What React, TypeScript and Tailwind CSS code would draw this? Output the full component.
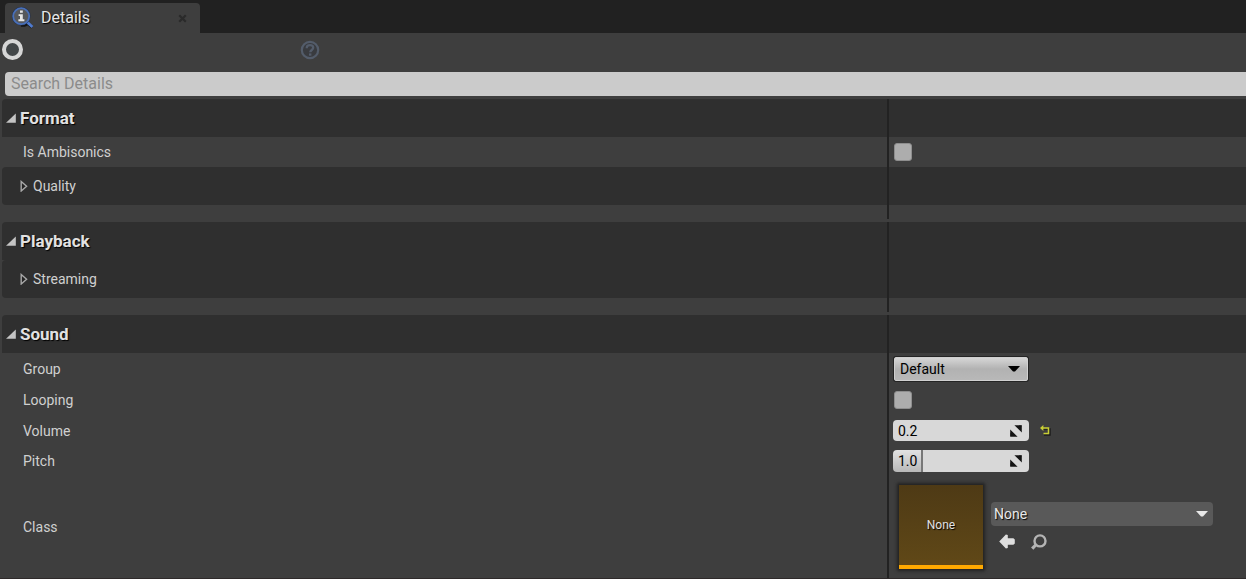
import React from 'react';

// Icons

const DetailsIcon: React.FC = () => (
  <svg width="22" height="22" viewBox="0 0 22 22" aria-hidden="true">
    <path d="M9 18.5c4 .6 6-1 6.5-2l4.5 4.2" fill="none" stroke="#151515" strokeWidth="2.4" />
    <path d="M14.5 14.5 20.4 20" stroke="#4f7bd0" strokeWidth="2.8" />
    <circle cx="9.2" cy="9.2" r="8" fill="#505256" stroke="#22304e" strokeWidth="2.6" />
    <circle cx="9.2" cy="9.2" r="8" fill="#56585c" stroke="#4a70b8" strokeWidth="1.8" />
    <path d="M8 3.6h2.8v2.2H8zM6.6 7.2h4.2v5h1.6v2H6.4v-2H8V9H6.6z" fill="#e6e6e6" />
  </svg>
);

const HelpIcon: React.FC = () => (
  <svg width="20" height="20" viewBox="0 0 20 20" fill="none" stroke="#535c6a" aria-hidden="true">
    <circle cx="10" cy="10" r="8.2" strokeWidth="2.2" fill="#393b3f" />
    <path d="M6.8 8.2V7.4C7 5.9 8.3 5.2 10 5.2s3.2.9 3.2 2.6c0 2.2-2.9 2.2-2.9 4.4" strokeWidth="2.3" />
    <path d="M10.2 13.4v2.3" strokeWidth="2.4" />
  </svg>
);

const ExpandedArrow: React.FC = () => (
  <svg width="10" height="10" viewBox="0 0 10 10" aria-hidden="true">
    <path d="M9.8 0.5v9.3H0z" fill="#c4c4c4" />
  </svg>
);

const CollapsedArrow: React.FC = () => (
  <svg width="8" height="12" viewBox="0 0 8 12" aria-hidden="true">
    <path d="M1.2 1.5 6.6 6.3 1.2 11z" fill="#242424" stroke="#a8a8a8" strokeWidth="1.4" />
  </svg>
);

const DownArrow: React.FC<{ className: string }> = ({ className }) => (
  <svg width="12" height="6" viewBox="0 0 12 6" className={className} aria-hidden="true">
    <path d="M0 0h12L7 5.5H5z" fill="currentColor" />
  </svg>
);

const DragIcon: React.FC = () => (
  <svg
    width="12"
    height="12"
    viewBox="0 0 12 12"
    className="pointer-events-none absolute top-1/2 right-[7px] -translate-y-1/2"
    aria-hidden="true"
  >
    <path d="M4.4 0.2h7.4v7.4zM0.2 4.4l7.4 7.4H0.2z" fill="#141414" />
    <path d="m9 1 2.5 0M1 11V8" stroke="#141414" />
  </svg>
);

const ResetIcon: React.FC = () => (
  <svg width="11" height="11" viewBox="0 0 11 11" aria-hidden="true">
    <path d="M2.5 4h7.5v6H4" fill="none" stroke="#1c1c1c" strokeWidth="1.5" />
    <path d="M2 3h6.5v5.5H3.5" fill="none" stroke="#c9cf35" strokeWidth="1.5" />
    <path d="M0 3 3.4 0v6z" fill="#c9cf35" />
  </svg>
);

const UseArrowIcon: React.FC = () => (
  <svg width="16" height="15" viewBox="0 0 16 15" aria-hidden="true">
    <path d="M0.2 7.5 6.9 0.4 8.8 1v3.2h5.6l1.4 1.3v4l-1.4 1.3H8.8V14l-1.9 0.6z" fill="#dedede" />
  </svg>
);

const BrowseIcon: React.FC = () => (
  <svg width="16" height="16" viewBox="0 0 16 16" fill="none" stroke="#b4b4b4" aria-hidden="true">
    <circle cx="9" cy="6.9" r="5.5" strokeWidth="2.4" />
    <path d="M5.2 10.5 1.2 14.6" strokeWidth="3.2" />
  </svg>
);

// Layout pieces

type RowProps = {
  label: React.ReactNode;
  height: string;
  dark?: boolean;
  children?: React.ReactNode;
};

const Row: React.FC<RowProps> = ({ label, height, dark, children }) => (
  <div className={`grid grid-cols-[71.3%_1fr] ${height} ${dark ? 'bg-[#2f2f2f]' : ''}`}>
    <div className="flex items-center border-r-2 border-[#222222]">{label}</div>
    <div className="flex items-center pl-1">{children}</div>
  </div>
);

const HeaderRow: React.FC<{ title: string }> = ({ title }) => (
  <div className="overflow-hidden rounded-tl">
    <Row
      dark
      height="h-[38px]"
      label={
        <button type="button" className="flex items-center gap-1 pl-1">
          <ExpandedArrow />
          <span className="text-[17px] leading-5 font-bold text-[#e2e2e2] [text-shadow:1px_1px_1px_#000]">{title}</span>
        </button>
      }
    />
  </div>
);

const GroupRow: React.FC<{ title: string }> = ({ title }) => (
  <div className="overflow-hidden rounded-l">
    <Row
      dark
      height="h-[38px]"
      label={
        <button type="button" className="flex items-center gap-[5px] pl-[18px]">
          <CollapsedArrow />
          <span>{title}</span>
        </button>
      }
    />
  </div>
);

const SectionGap: React.FC = () => (
  <div className="pb-[3px]">
    <Row height="h-3.5" label={null} />
  </div>
);

const FieldLabel: React.FC<{ id: string; text: string }> = ({ id, text }) => (
  <label htmlFor={id} className="pl-[21px]">
    {text}
  </label>
);

const CheckBox: React.FC<{ id: string }> = ({ id }) => (
  <input
    id={id}
    type="checkbox"
    className="ml-px size-[18px] appearance-none rounded-[3px] border border-[#8e8e8e] bg-[#adadad] checked:bg-[#e0a030]"
  />
);

const DetailsPanel: React.FC = () => {
  return (
    <div className="flex min-h-screen flex-col overflow-hidden bg-[#3e3e3e] font-[Roboto,'Liberation_Sans',sans-serif] text-sm text-[#d0d0d0]">
      {/* Tab bar */}
      <div className="flex h-[33px] items-end bg-[#212121] pl-[5px]">
        <div className="flex h-[30px] w-[195px] items-center rounded-t-sm bg-[#3e3e3e] pr-3 pl-[7px]">
          <DetailsIcon />
          <h1 className="ml-[7px] flex-1 text-base leading-5 text-[#e6e6e6] [text-shadow:1px_1px_1px_#000]">Details</h1>
          <button type="button" aria-label="Close" className="flex size-3 items-center justify-center">
            <svg width="9" height="9" viewBox="0 0 9 9" aria-hidden="true">
              <path d="m1.2 1.2 6.6 6.6m0-6.6L1.2 7.8" stroke="#2a2a2a" strokeWidth="2.2" />
            </svg>
          </button>
        </div>
      </div>

      {/* Toolbar */}
      <div className="flex h-[39px] items-center pb-1.5 pl-0.5">
        <button type="button" aria-label="Object" className="size-[21px] rounded-full border-4 border-[#d6d6d6] bg-[#424648]" />
        <button type="button" aria-label="Help" className="ml-[277px]">
          <HelpIcon />
        </button>
      </div>

      <div className="pb-[3px] pl-[5px]">
        <input
          type="text"
          aria-label="Search Details"
          placeholder="Search Details"
          className="block h-6 w-full rounded-l-sm bg-[#cbcbcb] px-1.5 text-base text-[#222222] outline-none placeholder:text-[#8b8b8b]"
        />
      </div>

      <main className="flex-1 pl-0.5">
        <HeaderRow title="Format" />
        <Row height="h-[30px]" label={<FieldLabel id="ambisonics" text="Is Ambisonics" />}>
          <CheckBox id="ambisonics" />
        </Row>
        <GroupRow title="Quality" />
        <SectionGap />

        <HeaderRow title="Playback" />
        <GroupRow title="Streaming" />
        <SectionGap />

        <HeaderRow title="Sound" />
        <Row height="h-8" label={<FieldLabel id="group" text="Group" />}>
          <div className="relative ml-px text-black">
            <select
              id="group"
              className="block h-6 w-[134px] appearance-none rounded-xs border border-[#d0d0d0] bg-linear-to-b from-[#d6d6d6] via-[#b2b2b2] to-[#b8b8b8] px-[5px] shadow-[0_0_0_1px_#242424]"
            >
              <option>Default</option>
            </select>
            <DownArrow className="pointer-events-none absolute top-[9px] right-2" />
          </div>
        </Row>
        <Row height="h-[30px]" label={<FieldLabel id="looping" text="Looping" />}>
          <CheckBox id="looping" />
        </Row>
        <Row height="h-[31px]" label={<FieldLabel id="volume" text="Volume" />}>
          <div className="relative">
            <input id="volume" type="text" defaultValue="0.2" className="block h-[21px] w-[136px] rounded bg-[#d8d8d8] px-[5px] text-black" />
            <DragIcon />
          </div>
          <button type="button" aria-label="Reset to default" className="ml-[11px]">
            <ResetIcon />
          </button>
        </Row>
        <Row height="h-[30px]" label={<FieldLabel id="pitch" text="Pitch" />}>
          <div className="relative">
            <input
              id="pitch"
              type="text"
              defaultValue="1.0"
              className="block h-[22px] w-[136px] rounded bg-[#d8d8d8] bg-[linear-gradient(90deg,transparent_28px,#777777_28px),linear-gradient(#e2e2e2,#b8b8b8)] bg-[size:30px_100%] bg-no-repeat px-[5px] text-black"
            />
            <DragIcon />
          </div>
        </Row>
        <Row height="h-[102px]" label={<FieldLabel id="class" text="Class" />}>
          <button
            type="button"
            className="ml-1.5 size-[84px] border-b-4 border-[#ffa900] bg-linear-to-b from-[#4e3a15] to-[#604817] text-xs text-[#e2e2e2] shadow-[0_0_3px_2px_#222222] [text-shadow:1px_1px_1px_#000]"
          >
            None
          </button>
          <div className="ml-2 pb-[3px]">
            <div className="relative text-[#e8e8e8]">
              <select
                id="class"
                className="block h-6 w-[222px] appearance-none rounded bg-[#595959] px-[3px] [text-shadow:1px_1px_1px_#000]"
              >
                <option>None</option>
              </select>
              <DownArrow className="pointer-events-none absolute top-[9px] right-[5px]" />
            </div>
            <div className="mt-2 flex items-center gap-4 pl-2">
              <button type="button" aria-label="Use selected asset">
                <UseArrowIcon />
              </button>
              <button type="button" aria-label="Browse to asset">
                <BrowseIcon />
              </button>
            </div>
          </div>
        </Row>
      </main>
      <div className="h-px bg-[#2e2a2a]" />
    </div>
  );
};

export default DetailsPanel;
